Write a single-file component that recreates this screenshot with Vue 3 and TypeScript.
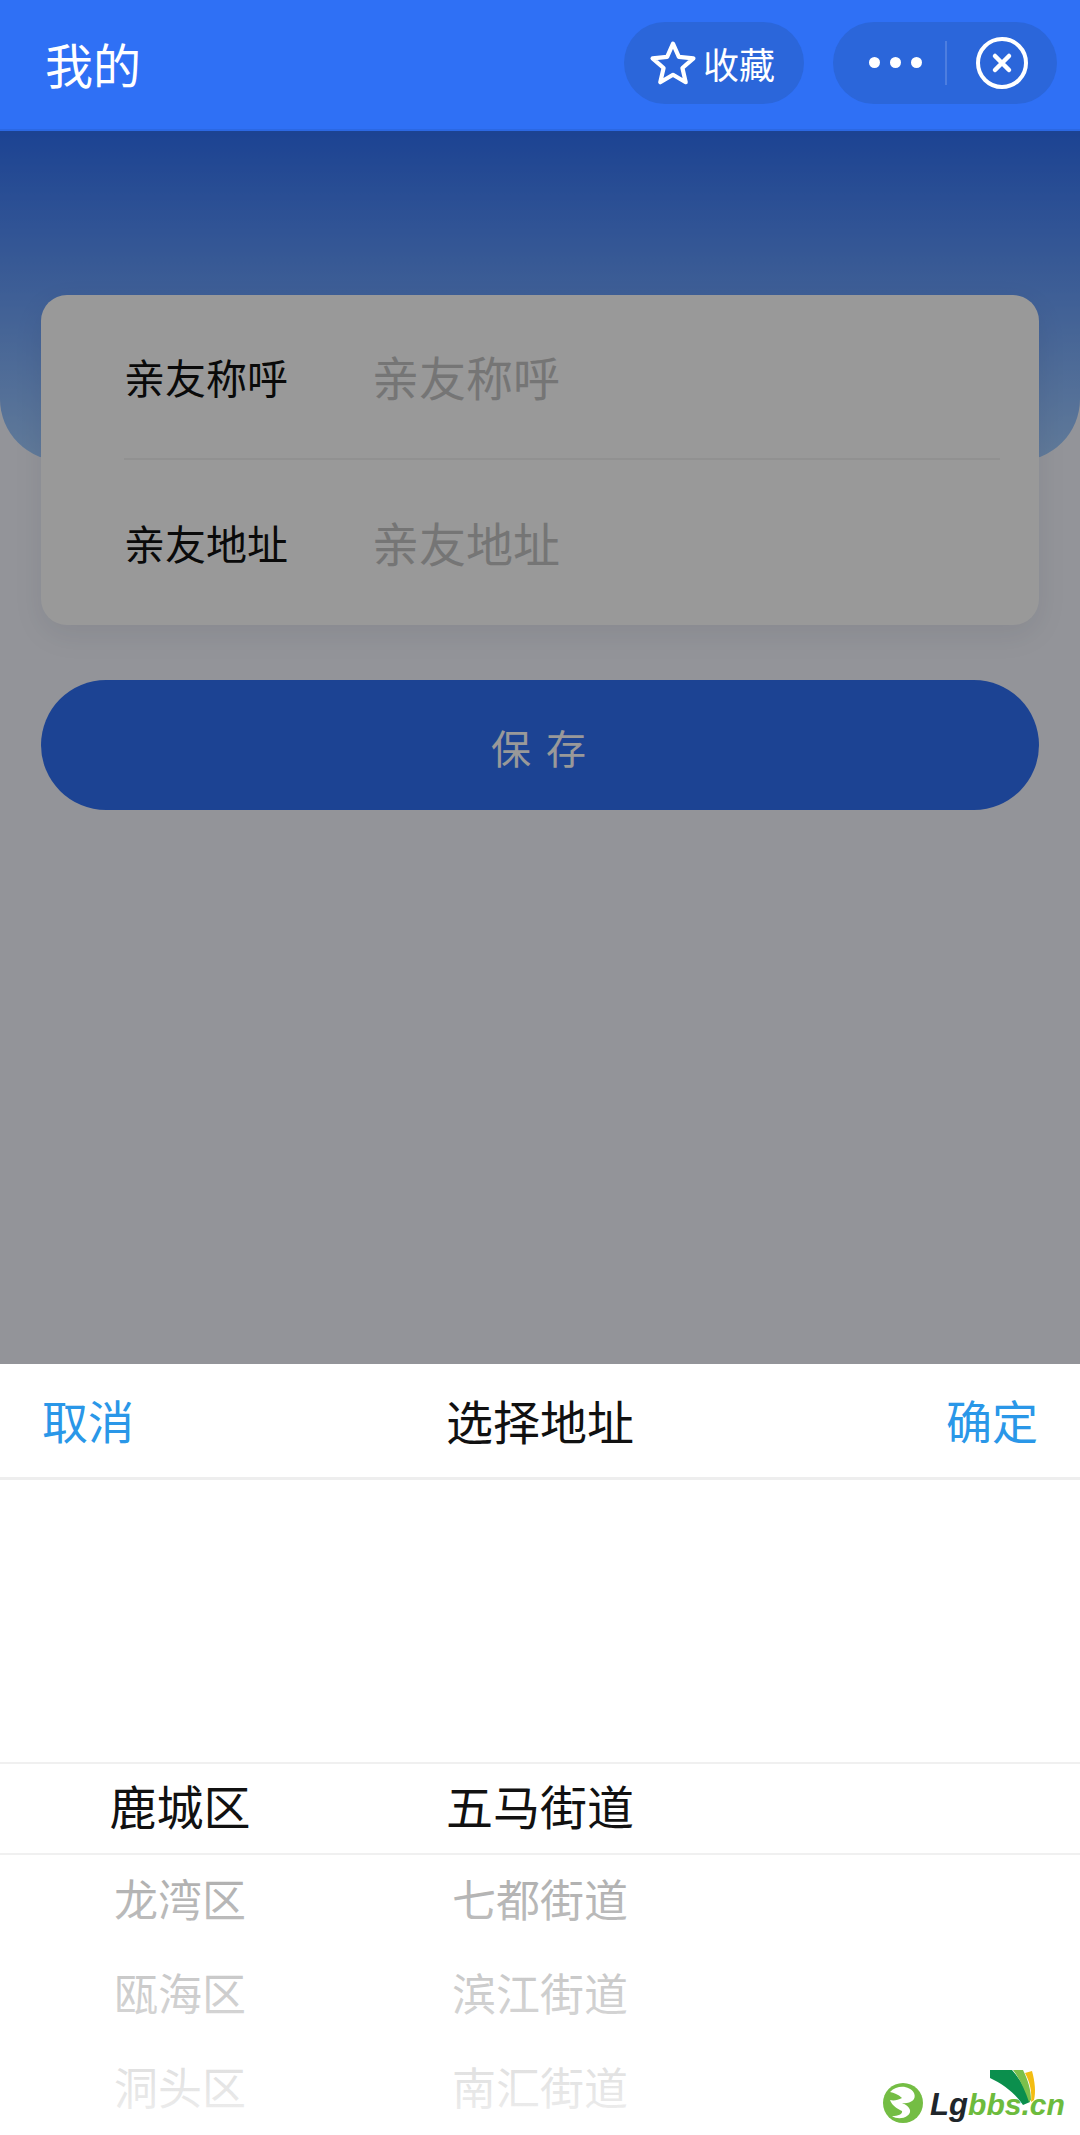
<template>
  <div class="page">
    <header class="nav">
      <span class="nav-title">我的</span>
      <div class="nav-actions">
        <div class="pill collect">
          <svg class="star" viewBox="0 0 46 44" width="48" height="46">
            <path
              d="M23 3.5 L28.6 16.2 L42.6 17.6 L32 26.8 L35.2 40.4 L23 33.3 L10.8 40.4 L14 26.8 L3.4 17.6 L17.4 16.2 Z"
              fill="none"
              stroke="#ffffff"
              stroke-width="4"
              stroke-linejoin="round"
            />
          </svg>
          <span class="collect-text">收藏</span>
        </div>
        <div class="pill capsule">
          <div class="dots">
            <i v-for="n in 3" :key="n"></i>
          </div>
          <div class="capsule-line"></div>
          <svg class="close" viewBox="0 0 52 52" width="52" height="52">
            <circle cx="26" cy="26" r="24" fill="none" stroke="#ffffff" stroke-width="4" />
            <path d="M19 19 L33 33 M33 19 L19 33" stroke="#ffffff" stroke-width="4.5" stroke-linecap="round" />
          </svg>
        </div>
      </div>
    </header>

    <div class="content">
      <div class="hero"></div>
      <div class="card">
        <div v-for="row in formRows" :key="row" class="form-row">
          <span class="form-label">{{ row }}</span>
          <span class="form-placeholder">{{ row }}</span>
        </div>
      </div>
      <div class="save-btn">保 存</div>

      <!-- 遮罩 -->
      <div class="dim"></div>
    </div>

    <!-- 地址选择器 -->
    <section class="sheet">
      <div class="sheet-head">
        <span class="sheet-action">取消</span>
        <span class="sheet-title">选择地址</span>
        <span class="sheet-action">确定</span>
      </div>
      <div class="picker">
        <div v-for="(col, ci) in columns" :key="ci" class="picker-col">
          <div
            v-for="(item, i) in col"
            :key="item"
            class="picker-item"
            :class="{ active: i === 0 }"
          >{{ item }}</div>
        </div>
        <div class="picker-line"></div>
        <div class="picker-mask"></div>
      </div>
    </section>

    <!-- 水印 -->
    <svg class="watermark" viewBox="0 0 220 85" width="220" height="85">
      <path d="M130 20 L152 20 C161 30 167 42 170 52 L163 55 C155 43 143 34 130 28 Z" fill="#0b8f4d" />
      <path d="M153 20 L163 20 C168 30 171 40 171 50 L169 52 C165 40 160 29 153 20 Z" fill="#7cc04b" />
      <path d="M165 23 L172 21 C175 32 176 42 174 50 L171 52 C172 42 170 32 165 23 Z" fill="#f3bd12" />
      <circle cx="43" cy="53" r="20" fill="#74bd44" />
      <path
        d="M30 42 C38 34 50 36 54 43 C57 50 50 54 42 53 C50 56 53 62 47 66 C43 69 36 69 32 66 C38 66 43 64 42 61 C38 59 32 56 30 50 C34 51 38 50 42 48 C38 44 34 43 30 42 Z"
        fill="#ffffff"
      />
      <text x="70" y="65" class="wm-lg" textLength="38" lengthAdjust="spacingAndGlyphs">Lg</text>
      <text x="108" y="65" class="wm-bbs" textLength="97" lengthAdjust="spacingAndGlyphs">bbs.cn</text>
    </svg>
  </div>
</template>

<script setup lang="ts">
const formRows: string[] = ['亲友称呼', '亲友地址']

const columns: string[][] = [
  ['鹿城区', '龙湾区', '瓯海区', '洞头区'],
  ['五马街道', '七都街道', '滨江街道', '南汇街道'],
  [],
]
</script>

<style>
body {
  background: #f5f7ff;
}
</style>

<style scoped>
.page {
  position: relative;
  height: 100vh;
  overflow: hidden;
  display: flex;
  flex-direction: column;
  font-family: "Noto Sans CJK SC", "Liberation Sans", sans-serif;
  background: #f5f7ff;
}

/* 顶部导航 */
.nav {
  flex: none;
  height: 131px;
  box-sizing: border-box;
  padding: 22px 23px 26px 45px;
  display: flex;
  align-items: center;
  justify-content: space-between;
  background: #2f70f5;
  border-bottom: 2px solid #2b68e4;
}

.nav-title {
  font-size: 48px;
  color: #fff;
}

.nav-actions {
  display: flex;
  gap: 29px;
}

.pill {
  height: 82px;
  box-sizing: border-box;
  border-radius: 41px;
  background: #2b66da;
  display: flex;
  align-items: center;
}

.collect {
  width: 180px;
  padding-left: 25px;
  gap: 6px;
}

.collect-text {
  font-size: 36px;
  color: #fff;
}

.capsule {
  width: 224px;
  padding-left: 36px;
}

.dots {
  display: flex;
  gap: 10px;
}

.dots i {
  display: block;
  width: 11px;
  height: 11px;
  border-radius: 50%;
  background: #fff;
}

.capsule-line {
  width: 2px;
  height: 44px;
  margin-left: 23px;
  margin-right: 29px;
  background: rgba(255, 255, 255, 0.16);
}

/* 页面内容 */
.content {
  position: relative;
  flex: 1;
}

.hero {
  height: 330px;
  border-radius: 0 0 62px 62px;
  background: linear-gradient(180deg, #2f70f5 0%, #a3cdff 100%);
}

.card {
  position: relative;
  margin: -166px 41px 0;
  padding: 0 39px 0 83px;
  border-radius: 26px;
  background: #fff;
  box-shadow: 0 10px 30px rgba(30, 30, 60, 0.08);
}

.form-row {
  height: 165px;
  box-sizing: border-box;
  padding-bottom: 2px;
  display: flex;
  align-items: center;
}

.form-row:first-child {
  border-bottom: 2px solid #f2f2f2;
}

.form-label {
  width: 248px;
  font-size: 41px;
  color: #111;
}

.form-placeholder {
  font-size: 47px;
  color: #c4c4c4;
}

.save-btn {
  margin: 55px 41px 0;
  height: 130px;
  box-sizing: border-box;
  padding-top: 3px;
  border-radius: 65px;
  background: #2f70f5;
  color: #fff;
  font-size: 40px;
  letter-spacing: 3px;
  display: flex;
  align-items: center;
  justify-content: center;
}

.dim {
  position: absolute;
  inset: 0;
  background: rgba(0, 0, 0, 0.4);
}

/* 底部弹层 */
.sheet {
  flex: none;
  height: 771px;
  position: relative;
  display: flex;
  flex-direction: column;
  background: #fff;
}

.sheet-head {
  flex: none;
  height: 116px;
  box-sizing: border-box;
  padding: 0 42px 3px;
  display: flex;
  align-items: center;
  justify-content: space-between;
  border-bottom: 3px solid #eeeeee;
}

.sheet-action {
  font-size: 46px;
  color: #2a97e8;
}

.sheet-title {
  font-size: 47px;
  color: #111;
}

.picker {
  position: relative;
  flex: 1;
  display: flex;
  padding-top: 277px;
  overflow: hidden;
}

.picker-col {
  flex: 1;
  display: flex;
  flex-direction: column;
  align-items: center;
}

.picker-item {
  height: 94px;
  flex: none;
  display: flex;
  align-items: center;
  font-size: 44px;
  color: #222;
}

.picker-item.active {
  font-size: 47px;
  color: #111;
}

.picker-line {
  position: absolute;
  left: 0;
  right: 0;
  top: 282px;
  height: 89px;
  border-top: 2px solid #f0f0f0;
  border-bottom: 2px solid #f0f0f0;
  box-sizing: content-box;
}

.picker-mask {
  position: absolute;
  left: 0;
  right: 0;
  top: 375px;
  bottom: 0;
  background: linear-gradient(180deg, rgba(255, 255, 255, 0.62) 0%, rgba(255, 255, 255, 0.94) 100%);
}

.watermark {
  position: absolute;
  right: 0;
  bottom: 0;
}

.wm-lg {
  font-family: "Liberation Sans", sans-serif;
  font-size: 32px;
  font-weight: 700;
  font-style: italic;
  fill: #20262b;
}

.wm-bbs {
  font-family: "Liberation Sans", sans-serif;
  font-size: 30px;
  font-weight: 700;
  font-style: italic;
  fill: #6dbb3d;
}
</style>
